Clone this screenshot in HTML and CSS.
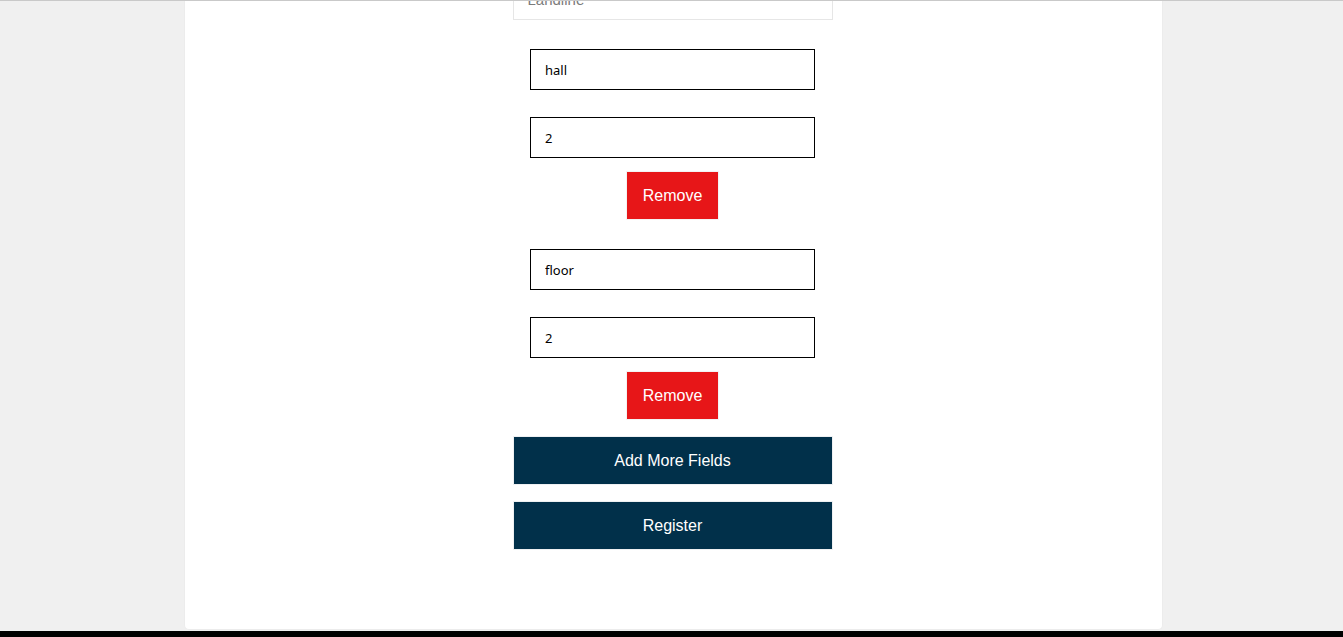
FILE: index.html
```html
<!DOCTYPE html>
<html lang="en">
<head>
<meta charset="utf-8">
<title>Register</title>
<link rel="stylesheet" href="styles.css">
</head>
<body>
<main class="card">
  <form class="form">
    <input class="landline" type="text" placeholder="Landline">
    <div class="group">
      <input class="field" type="text" value="hall">
      <input class="field" type="text" value="2">
      <button class="remove" type="button">Remove</button>
    </div>
    <div class="group">
      <input class="field" type="text" value="floor">
      <input class="field" type="text" value="2">
      <button class="remove" type="button">Remove</button>
    </div>
    <button class="primary" type="button">Add More Fields</button>
    <button class="primary" type="button">Register</button>
  </form>
</main>
<footer class="footer"></footer>
</body>
</html>
```
FILE: styles.css
```css
html, body {
  margin: 0;
  padding: 0;
}
body {
  background: #f0f0f0;
  border-top: 1px solid #c9c9c9;
  overflow: hidden;
  height: 636px;
  display: flex;
  flex-direction: column;
}
.card {
  width: 979px;
  margin-left: 184px;
  box-sizing: border-box;
  height: 629px;
  background: #ffffff;
  border-left: 1px solid #ececec;
  border-right: 1px solid #ececec;
  border-bottom: 1px solid #ececec;
  border-radius: 0 0 5px 5px;
  flex: none;
}
.form {
  display: flex;
  flex-direction: column;
  align-items: center;
  gap: 16px;
  margin-top: -22px;
  padding-right: 2px;
}
.landline {
  width: 320px;
  height: 41px;
  box-sizing: border-box;
  border: 1px solid #e6e6e6;
  padding: 0 14px;
  font-family: "Liberation Sans", Arial, sans-serif;
  font-size: 15px;
  color: #333;
  outline: none;
}
.landline::placeholder {
  color: #7a7a7a;
}
.group {
  display: flex;
  flex-direction: column;
  align-items: center;
  padding-top: 13px;
}
.field {
  width: 285px;
  height: 41px;
  box-sizing: border-box;
  border: 1px solid #000;
  border-radius: 0;
  padding: 0 14px;
  font-family: "Noto Sans", "Open Sans", sans-serif;
  font-size: 13px;
  color: #000;
  outline: none;
  background: #fff;
}
.field + .field {
  margin-top: 27px;
}
.remove {
  margin-top: 13px;
  height: 49px;
  padding: 0 16px;
  border: 1px solid #f3f3f3;
  background: #e71618;
  color: #fff;
  font-family: "Liberation Sans", Arial, sans-serif;
  font-size: 16px;
  cursor: pointer;
}
.primary {
  width: 320px;
  height: 49px;
  border: 1px solid #eef0f2;
  background: #01304a;
  color: #fff;
  font-family: "Liberation Sans", Arial, sans-serif;
  font-size: 16px;
  cursor: pointer;
}
.footer {
  margin-top: 1px;
  flex: 1;
  background: #000;
}
```
